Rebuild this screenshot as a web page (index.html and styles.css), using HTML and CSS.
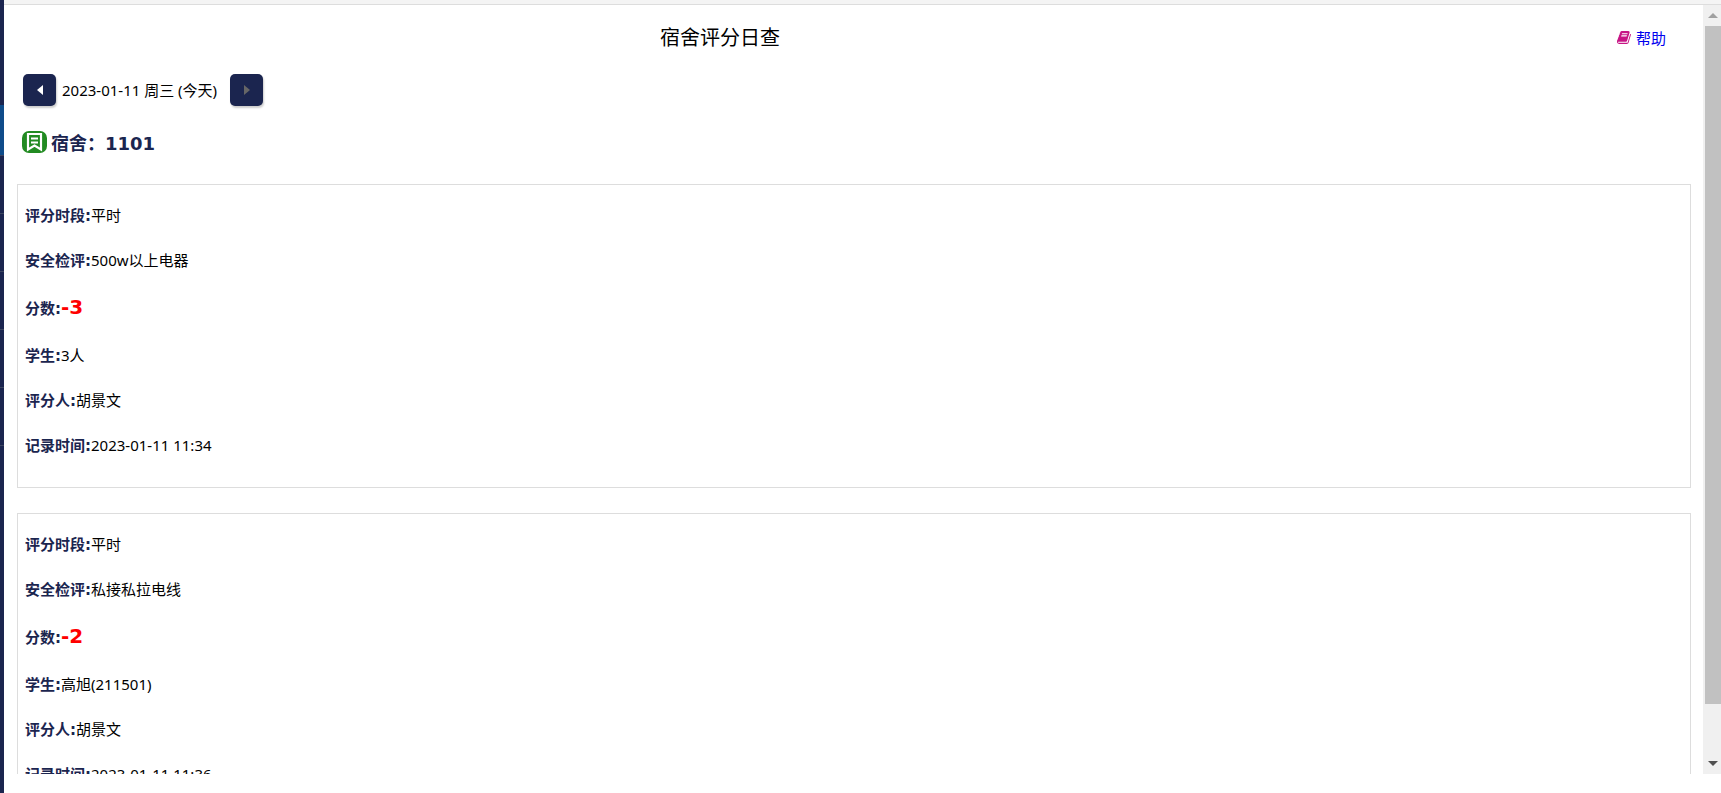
FILE: index.html
```html
<!DOCTYPE html>
<html lang="zh-CN">
<head>
    <meta charset="UTF-8">
    <meta name="viewport" content="width=device-width, initial-scale=1.0">
    <title>宿舍评分日查</title>
    <link rel="stylesheet" href="styles.css">
</head>
<body>
    <nav class="sidebar">
        <div class="side-item side-top"></div>
        <div class="side-item active"></div>
        <div class="side-item"></div>
        <div class="side-item"></div>
        <div class="side-item"></div>
        <div class="side-item"></div>
        <div class="side-item"></div>
    </nav>
    <div class="page">
        <div class="topbar"></div>
        <div class="frame">
            <main class="content">
                <header class="header">
                    <h1>宿舍评分日查</h1>
                    <a class="help" href="#">
                        <svg class="help-icon" viewBox="0 0 1792 1792" aria-hidden="true"><path d="M1639 478q40 57 18 129l-275 906q-19 64-76.5 107.5t-122.5 43.5h-923q-77 0-148.5-53.5t-99.5-131.5q-24-67-2-127 0-4 3-27t4-37q1-8-3-21.5t-3-19.5q2-11 8-21t16.5-23.5 16.5-23.5q23-38 45-91.5t30-91.5q3-10 .5-30t-.5-28q3-11 17-28t17-23q21-36 42-92t25-90q1-9-2.5-32t.5-28q4-13 22-30.5t22-22.5q19-26 42.5-84.5t27.5-96.5q1-8-3-25.5t-2-26.5q2-8 9-18t18-23 17-21q8-12 16.5-30.5t15-35 16-36 19.5-32 26.5-23.5 36-11.5 47.5 5.5l-1 3q38-9 51-9h761q74 0 114 56t18 130l-274 906q-36 119-71.5 153.5t-128.5 34.5h-869q-27 0-38 15-11 16-1 43 24 70 144 70h923q29 0 56-15.5t35-41.5l300-987q7-22 5-57 38 15 59 43zm-1064 2q-4 13 2 22.5t20 9.5h608q13 0 25.5-9.5t16.5-22.5l21-64q4-13-2-22.5t-20-9.5h-608q-13 0-25.5 9.5t-16.5 22.5zm-83 256q-4 13 2 22.5t20 9.5h608q13 0 25.5-9.5t16.5-22.5l21-64q4-13-2-22.5t-20-9.5h-608q-13 0-25.5 9.5t-16.5 22.5z"/></svg>
                        <span>帮助</span>
                    </a>
                </header>

                <div class="date-nav">
                    <button class="nav-btn" type="button" aria-label="前一天">
                        <svg viewBox="0 0 6 10" aria-hidden="true"><path d="M6 0v10L0 5z"/></svg>
                    </button>
                    <span class="date">2023-01-11 周三 (今天)</span>
                    <button class="nav-btn" type="button" aria-label="后一天" disabled>
                        <svg viewBox="0 0 6 10" aria-hidden="true"><path d="M0 0v10l6-5z"/></svg>
                    </button>
                </div>

                <h2 class="dorm">
                    <svg class="dorm-icon" viewBox="0 0 25 22" aria-hidden="true">
                        <rect width="25" height="22" rx="7" fill="#228b22"/>
                        <path d="M6 3h13v15.500l-6.500-4-6.500 4zM9 7.500h7M9 11.500h7" fill="none" stroke="#fff" stroke-width="2.200"/>
                    </svg>
                    <span>宿舍：1101</span>
                </h2>

                <section class="card">
                    <p><b>评分时段:</b>平时</p>
                    <p><b>安全检评:</b>500w以上电器</p>
                    <p class="score-row"><b>分数:</b><b class="score">-3</b></p>
                    <p><b>学生:</b>3人</p>
                    <p><b>评分人:</b>胡景文</p>
                    <p><b>记录时间:</b>2023-01-11 11:34</p>
                </section>

                <section class="card">
                    <p><b>评分时段:</b>平时</p>
                    <p><b>安全检评:</b>私接私拉电线</p>
                    <p class="score-row"><b>分数:</b><b class="score">-2</b></p>
                    <p><b>学生:</b>高旭(211501)</p>
                    <p><b>评分人:</b>胡景文</p>
                    <p><b>记录时间:</b>2023-01-11 11:36</p>
                </section>
            </main>
            <div class="scrollbar" aria-hidden="true">
                <div class="arrow up"></div>
                <div class="track"><div class="thumb"></div></div>
                <div class="arrow down"></div>
            </div>
        </div>
    </div>
</body>
</html>
```
FILE: styles.css
```css
* {
    box-sizing: border-box;
}

body {
    margin: 0;
    display: flex;
    height: 100vh;
    overflow: hidden;
    background: #fff;
    color: #000;
    font-family: "Noto Sans", "Noto Sans CJK SC", sans-serif;
    font-size: 15px;
}

/* Collapsed menu */
.sidebar {
    width: 4px;
    flex-shrink: 0;
    background: #1b254f;
}

.side-item {
    height: 58px;
    border-bottom: 1px solid #3d4660;
}

.side-top {
    height: 105px;
    border-bottom: none;
}

.active {
    height: 51px;
    background: #0f4c8a;
}

.page {
    flex: 1;
    min-width: 0;
    display: flex;
    flex-direction: column;
    padding-bottom: 19px;
}

.topbar {
    height: 5px;
    flex-shrink: 0;
    background: #f4f4f4;
    border-bottom: 1px solid #ddd;
}

.frame {
    flex: 1;
    min-height: 0;
    display: flex;
}

.content {
    flex: 1;
    overflow: hidden;
    padding: 0 12px 0 13px;
}

.header {
    display: grid;
    grid-template-columns: 84% 16%;
    align-items: center;
    height: 64px;
}

h1 {
    margin: 0;
    padding-bottom: 2px;
    font-size: 20px;
    font-weight: normal;
    text-align: center;
}

.help {
    display: flex;
    justify-content: flex-end;
    align-items: center;
    gap: 4px;
    padding-right: 25px;
    color: #0000ee;
    text-decoration: none;
}

.help-icon {
    width: 15px;
    height: 15px;
    fill: #c71585;
}

.date-nav {
    display: flex;
    align-items: center;
    gap: 6px;
    height: 42px;
    padding-left: 6px;
}

.date {
    min-width: 162px;
    padding-bottom: 2px;
}

.nav-btn {
    display: flex;
    align-items: center;
    justify-content: center;
    width: 33px;
    height: 32px;
    padding: 0;
    border: none;
    border-radius: 5px;
    background: #1b254f;
    box-shadow: 1px 2px 2px rgba(0, 0, 0, 0.2);
    cursor: pointer;
}

.nav-btn svg {
    width: 6px;
    height: 10px;
    fill: #fff;
}

.nav-btn:disabled svg {
    fill: #666;
}

.dorm {
    display: flex;
    align-items: center;
    gap: 4px;
    height: 62px;
    margin: 0 0 11px;
    padding-left: 5px;
    color: #1b254f;
    font-family: "DejaVu Sans", "Noto Sans CJK SC", sans-serif;
    font-size: 18px;
}

.dorm-icon {
    width: 25px;
    height: 22px;
}

.card {
    margin-bottom: 25px;
    padding: 8px 8px 19px 7px;
    border: 1px solid #ddd;
}

.card p {
    height: 45px;
    margin: 0;
    line-height: 44px;
}

.card .score-row {
    height: 50px;
    line-height: 48px;
}

.card b {
    color: #1b254f;
    font-family: "DejaVu Sans", "Noto Sans CJK SC", sans-serif;
}

.card .score {
    color: #f00;
    font-size: 20px;
}

.scrollbar {
    display: flex;
    flex-direction: column;
    width: 18px;
    background: #f0f0f0;
}

.arrow {
    display: flex;
    align-items: center;
    justify-content: center;
    height: 21px;
    padding-left: 2px;
}

.arrow::before {
    content: "";
    border: 5px solid transparent;
    border-top-width: 0;
    border-bottom: 5px solid #a0a0a0;
}

.down::before {
    border-top: 5px solid #505050;
    border-bottom-width: 0;
}

.track {
    flex: 1;
    padding: 0 0 49px 2px;
}

.thumb {
    height: 100%;
    background: #c1c1c1;
}
```
